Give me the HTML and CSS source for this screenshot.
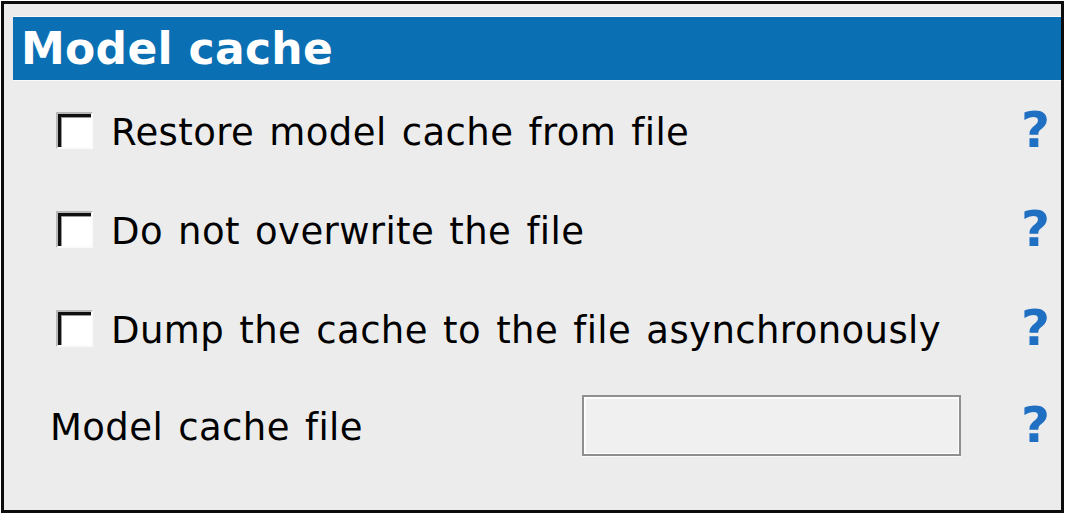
FILE: index.html
```html
<!DOCTYPE html>
<html>
<head>
<meta charset="utf-8">
<link rel="stylesheet" href="styles.css">
</head>
<body>
<div class="panel">
  <div class="header">Model cache</div>
  <div class="row">
    <span class="check"></span>
    <span class="label">Restore model cache from file</span>
    <span class="help">?</span>
  </div>
  <div class="row">
    <span class="check"></span>
    <span class="label">Do not overwrite the file</span>
    <span class="help">?</span>
  </div>
  <div class="row">
    <span class="check"></span>
    <span class="label">Dump the cache to the file asynchronously</span>
    <span class="help">?</span>
  </div>
  <div class="row row-input">
    <span class="label field-label">Model cache file</span>
    <span class="input"></span>
    <span class="help">?</span>
  </div>
</div>
</body>
</html>
```

FILE: styles.css
```css
html, body {
  margin: 0;
  padding: 0;
  background: #ffffff;
}
.panel {
  box-sizing: border-box;
  margin: 1px 0 0 1px;
  width: 1063px;
  height: 512px;
  border: 3px solid #0c0c0c;
  background: #ececec;
  padding: 13px 0 0 9px;
  font-family: "DejaVu Sans", Verdana, sans-serif;
  color: #000;
}
.header {
  height: 63px;
  background: #0b6fb3;
  color: #fff;
  font-weight: bold;
  font-size: 44px;
  line-height: 63px;
  padding-left: 8px;
  box-shadow: 0 -1px 0 #fafafa, 0 1px 0 #fafafa;
  letter-spacing: 0.3px;
}
.row {
  display: flex;
  align-items: center;
  height: 99px;
  padding-left: 43px;
  padding-right: 11px;
}
.header + .row {
  margin-top: 3px;
}
.check {
  box-sizing: border-box;
  flex: none;
  width: 37px;
  height: 37px;
  background: #fff;
  border: 2px solid;
  border-color: #b8b8b8 #fbfbfb #fbfbfb #b8b8b8;
  box-shadow: inset 3px 3px 0 #101010, inset 4px 4px 0 #9a9a9a;
  margin-right: 18px;
  margin-bottom: 4px;
}
.label {
  font-size: 37px;
  letter-spacing: 0.4px;
  word-spacing: 3px;
  white-space: nowrap;
}
.help {
  margin-left: auto;
  color: #1f6fc2;
  font-weight: bold;
  font-size: 50px;
  line-height: 1;
  position: relative;
  top: -3px;
}
.row-input {
  height: 95px;
  padding-left: 37px;
}
.field-label {
  width: 532px;
}
.input {
  box-sizing: border-box;
  width: 379px;
  height: 61px;
  margin-bottom: 4px;
  background: #f0f0f0;
  border: 2px solid #8f8f8f;
  box-shadow: inset 2px 2px 0 #fdfdfd, inset -1px -1px 0 #fdfdfd, 0 1px 0 #fbfbfb;
}
```
